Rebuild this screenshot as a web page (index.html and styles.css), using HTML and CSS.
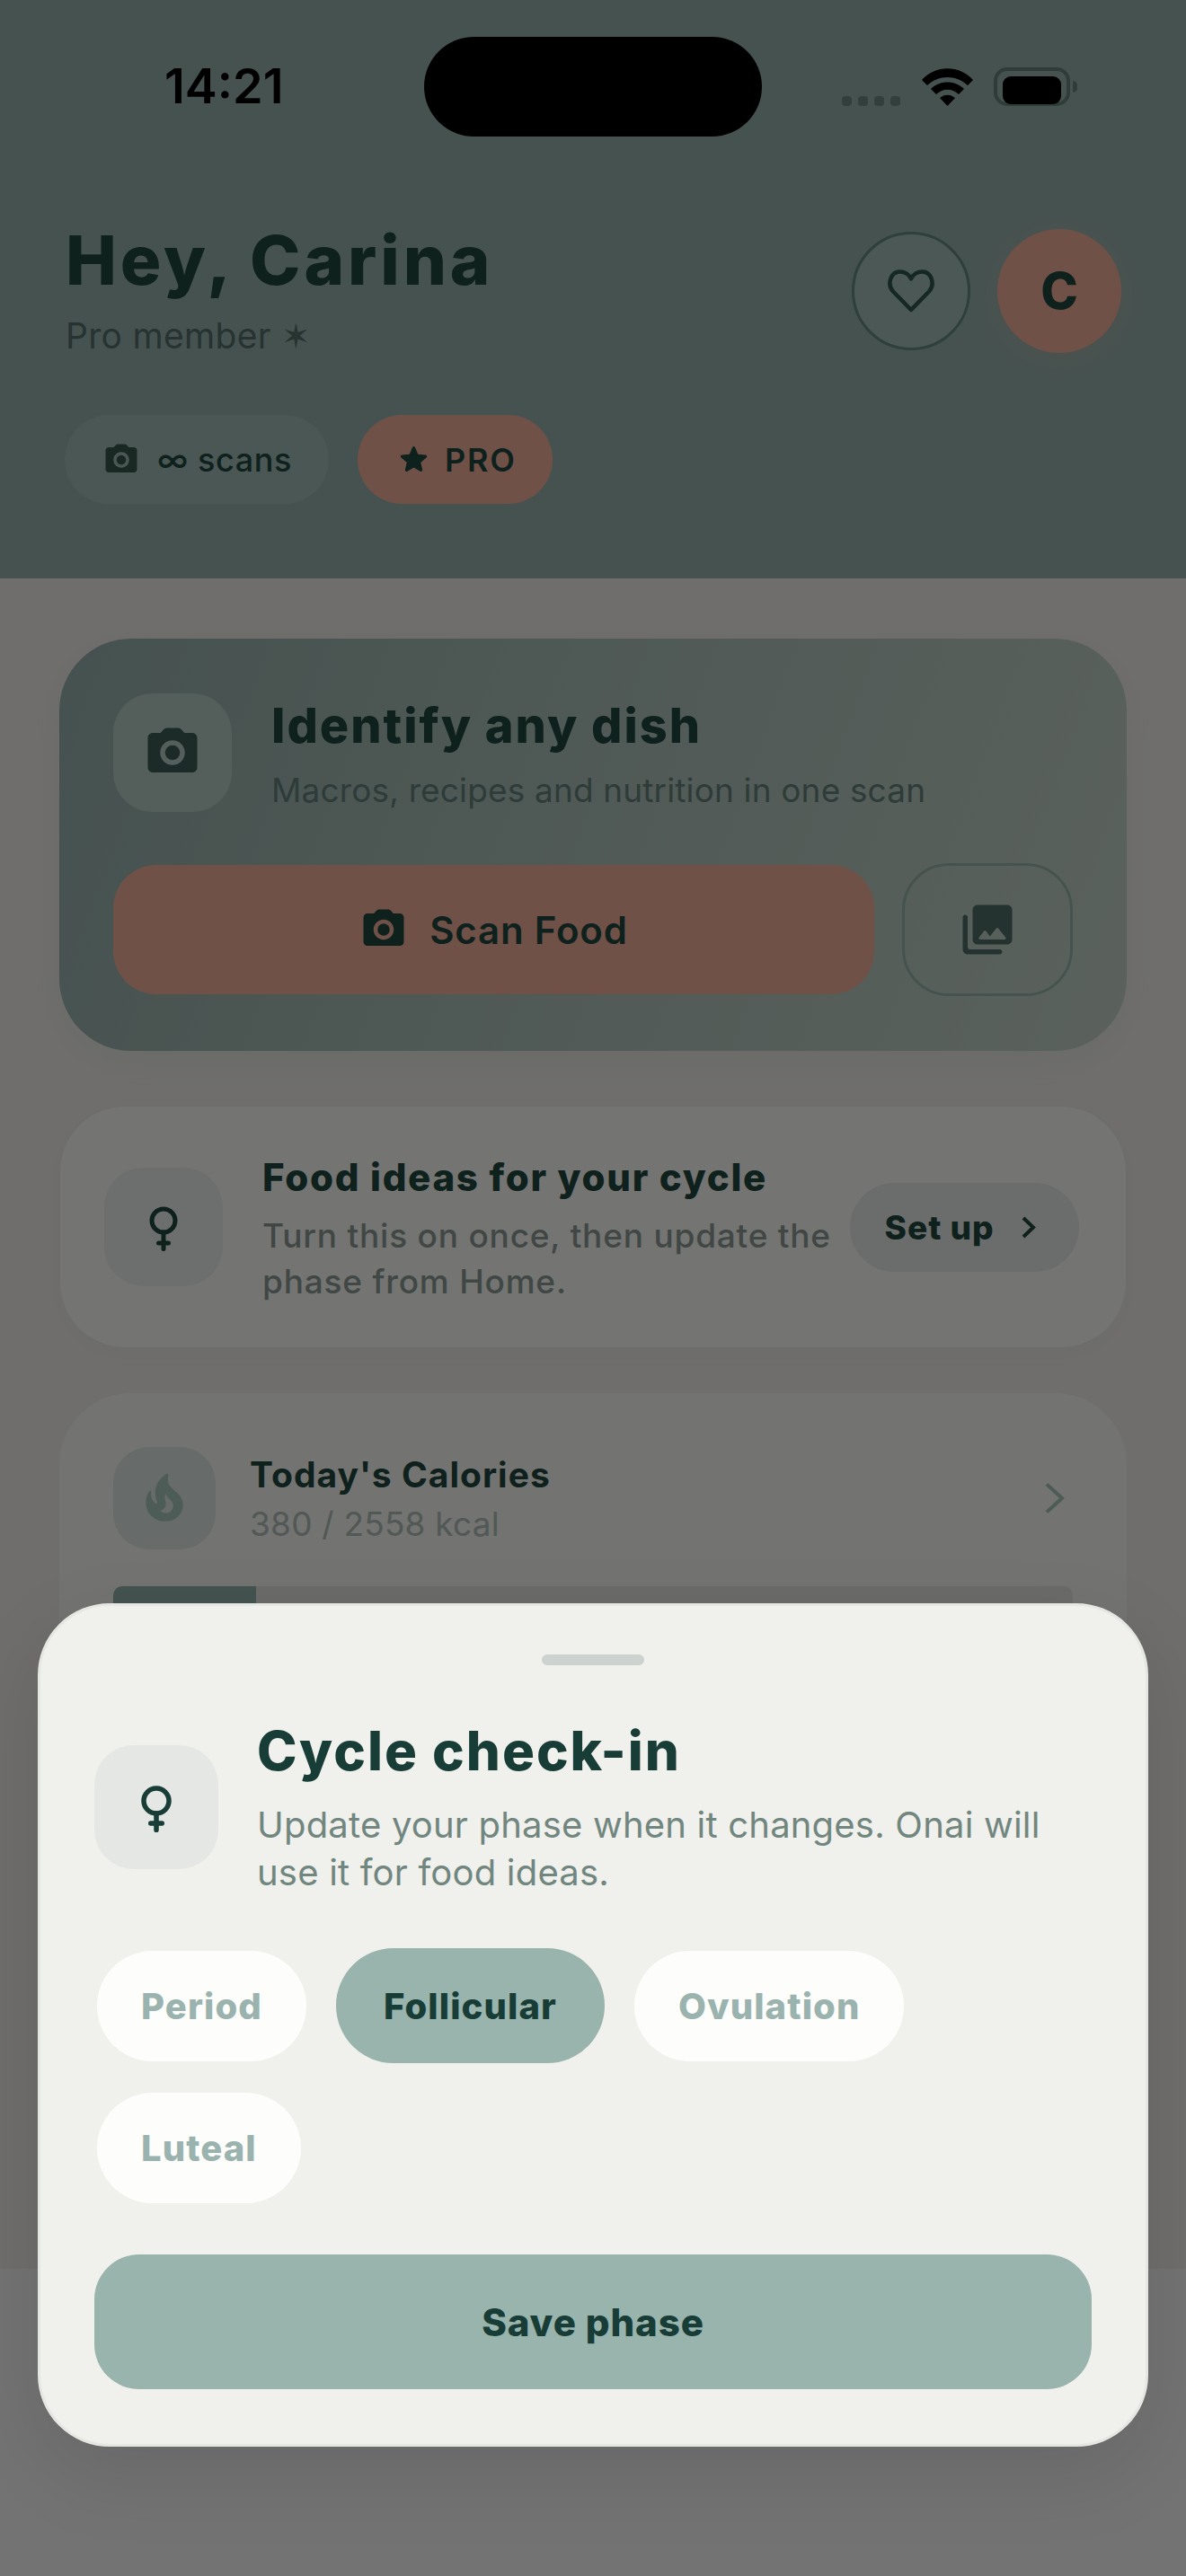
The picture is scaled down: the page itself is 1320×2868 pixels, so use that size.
FILE: index.html
```html
<!DOCTYPE html>
<html lang="en">
<head>
    <meta charset="UTF-8">
    <meta name="viewport" content="width=device-width, initial-scale=1.0">
    <title>Cycle check-in</title>
    <link rel="stylesheet" href="styles.css">
</head>
<body>
    <div class="screen">
        <header class="hero">
            <div class="status">
                <span class="time">14:21</span>
                <span class="island"></span>
                <div class="status-icons">
                    <div class="signal"><i></i><i></i><i></i><i></i></div>
                    <svg class="wifi" viewBox="0 0 57 42">
                        <path d="M0 13C15-4 42-4 57 13l-6 6C38 7 19 7 6 19z"/>
                        <path d="M10 23c10-10 27-10 37 0l-6 6c-8-7-17-7-25 0z"/>
                        <path d="M20 33c5-4.500 12-4.500 17 0l-8.500 9z"/>
                    </svg>
                    <div class="battery"><span class="battery-fill"></span></div>
                    <span class="battery-nub"></span>
                </div>
            </div>

            <div class="hero-row">
                <div>
                    <h1 class="greeting">Hey, Carina</h1>
                    <p class="member">Pro member ✶</p>
                </div>
                <div class="hero-actions">
                    <button class="heart-btn">
                        <svg class="heart" viewBox="0 0 56 51">
                            <path d="M28 47 8 26.500C1 19 5 4.500 15.500 4.500 21 4.500 26 7.500 28 12.500 30 7.500 35 4.500 40.500 4.500 51 4.500 55 19 48 26.500z"/>
                        </svg>
                    </button>
                    <div class="avatar">C</div>
                </div>
            </div>

            <div class="pills">
                <div class="pill pill-scans">
                    <svg class="pill-icon" viewBox="0 0 24 24"><path d="M20 4h-3.170l-1.240-1.350c-.37-.41-.91-.65-1.470-.65H9.880c-.56 0-1.100.24-1.480.65L7.170 4H4c-1.100 0-2 .9-2 2v12c0 1.100.9 2 2 2h16c1.100 0 2-.9 2-2V6c0-1.100-.9-2-2-2zm-8 13c-2.760 0-5-2.240-5-5s2.240-5 5-5 5 2.240 5 5-2.240 5-5 5z"/><circle cx="12" cy="12" r="3"/></svg>
                    <span>∞ scans</span>
                </div>
                <div class="pill pill-pro">
                    <svg class="star" viewBox="0 0 24 24"><path d="M12 17.270l4.150 2.510c.76.46 1.690-.22 1.490-1.080l-1.100-4.720 3.670-3.180c.67-.58.31-1.680-.57-1.750l-4.830-.41-1.890-4.460c-.34-.81-1.500-.81-1.840 0L9.190 8.630l-4.830.41c-.88.07-1.240 1.170-.57 1.750l3.670 3.180-1.100 4.720c-.2.86.73 1.540 1.490 1.080l4.150-2.500z"/></svg>
                    <span>PRO</span>
                </div>
            </div>
        </header>

        <main class="content">
            <section class="scan-card">
                <div class="scan-top">
                    <div class="icon-box scan-icon">
                        <svg class="camera" viewBox="0 0 24 24"><path d="M20 4h-3.170l-1.240-1.350c-.37-.41-.91-.65-1.470-.65H9.880c-.56 0-1.100.24-1.480.65L7.170 4H4c-1.100 0-2 .9-2 2v12c0 1.100.9 2 2 2h16c1.100 0 2-.9 2-2V6c0-1.100-.9-2-2-2zm-8 13c-2.760 0-5-2.240-5-5s2.240-5 5-5 5 2.240 5 5-2.240 5-5 5z"/><circle cx="12" cy="12" r="3"/></svg>
                    </div>
                    <div>
                        <h2 class="scan-title">Identify any dish</h2>
                        <p class="scan-sub">Macros, recipes and nutrition in one scan</p>
                    </div>
                </div>
                <div class="scan-actions">
                    <button class="scan-btn">
                        <svg class="scan-btn-icon" viewBox="0 0 24 24"><path d="M20 4h-3.170l-1.240-1.350c-.37-.41-.91-.65-1.470-.65H9.880c-.56 0-1.100.24-1.480.65L7.170 4H4c-1.100 0-2 .9-2 2v12c0 1.100.9 2 2 2h16c1.100 0 2-.9 2-2V6c0-1.100-.9-2-2-2zm-8 13c-2.760 0-5-2.240-5-5s2.240-5 5-5 5 2.240 5 5-2.240 5-5 5z"/><circle cx="12" cy="12" r="3"/></svg>
                        Scan Food
                    </button>
                    <button class="gallery-btn">
                        <svg class="gallery" viewBox="0 0 24 24"><path d="M22 16V4c0-1.100-.9-2-2-2H8c-1.100 0-2 .9-2 2v12c0 1.100.9 2 2 2h12c1.100 0 2-.9 2-2zm-10.600-3.470 1.630 2.180 2.580-3.220c.2-.25.58-.25.78 0l2.960 3.700c.26.33.03.81-.39.81H9c-.41 0-.65-.47-.4-.8l2-2.670c.2-.26.6-.26.8 0zM2 7v13c0 1.100.9 2 2 2h13c.55 0 1-.45 1-1s-.45-1-1-1H5c-.55 0-1-.45-1-1V7c0-.55-.45-1-1-1s-1 .45-1 1z"/></svg>
                    </button>
                </div>
            </section>

            <section class="cycle-card">
                <div class="icon-box cycle-icon">
                    <svg class="venus" viewBox="0 0 40 50"><circle cx="20" cy="16" r="13"/><path d="M20 29v18.500M14.500 41h11"/></svg>
                </div>
                <div class="cycle-text">
                    <h3 class="cycle-title">Food ideas for your cycle</h3>
                    <p class="cycle-sub">Turn this on once, then update the phase from Home.</p>
                </div>
                <button class="setup-btn">
                    Set up
                    <svg class="setup-chevron" viewBox="0 0 18 27"><path d="M3 3l11 10.500L3 24"/></svg>
                </button>
            </section>

            <section class="calories-card">
                <div class="calories-row">
                    <div class="icon-box calories-icon">
                        <svg class="flame" viewBox="0 0 24 24"><path d="M19.480 12.350c-1.570-4.080-7.160-4.300-5.810-10.230.1-.44-.37-.78-.75-.55C9.290 3.710 6.680 8 8.870 13.620c.18.46-.36.89-.75.59-1.810-1.370-2-3.340-1.840-4.750.06-.52-.62-.77-.91-.34C4.690 10.160 4 11.840 4 14.370c.38 5.600 5.110 7.320 6.810 7.540 2.430.31 5.060-.14 6.950-1.870 2.080-1.930 2.840-5.010 1.720-7.690zm-9.280 5.030c1.440-.35 2.180-1.390 2.380-2.310.33-1.430-.96-2.830-.09-5.090.33 1.870 3.270 3.040 3.270 5.080.08 2.530-2.660 4.700-5.560 2.320z"/></svg>
                    </div>
                    <div class="calories-text">
                        <h3 class="calories-title">Today's Calories</h3>
                        <p class="calories-sub">380 / 2558 kcal</p>
                    </div>
                    <svg class="calories-chevron" viewBox="0 0 24 36"><path d="M3 2.500 20 18 3 33.500"/></svg>
                </div>
                <div class="track"><div class="track-fill" style="width: 14.9%"></div></div>
            </section>
        </main>

        <div class="tabbar"></div>
    </div>

    <div class="scrim"></div>

    <section class="sheet">
        <div class="handle"></div>
        <div class="sheet-head">
            <div class="sheet-icon">
                <svg class="sheet-venus" viewBox="0 0 40 52"><circle cx="20" cy="17" r="14"/><path d="M20 31v18.500M13.750 42h12.500"/></svg>
            </div>
            <div>
                <h2 class="sheet-title">Cycle check-in</h2>
                <p class="sheet-sub">Update your phase when it changes. Onai will use it for food ideas.</p>
            </div>
        </div>
        <div class="chips">
            <button class="chip">Period</button>
            <button class="chip chip-active">Follicular</button>
            <button class="chip">Ovulation</button>
            <button class="chip">Luteal</button>
        </div>
        <button class="save-btn">Save phase</button>
    </section>
</body>
</html>
```

FILE: styles.css
```css
* {
    box-sizing: border-box;
}
body {
    margin: 0;
    width: 1320px;
    height: 2868px;
    overflow: hidden;
    position: relative;
    font-family: Inter, "Liberation Sans", sans-serif;
    color: #1e423a;
}
h1, h2, h3, p {
    margin: 0;
}
button {
    font-family: inherit;
    color: inherit;
    border: none;
    padding: 0;
}
svg {
    display: block;
    fill: currentColor;
}
.screen {
    height: 2868px;
    display: flex;
    flex-direction: column;
}

/* top green area */
.hero {
    height: 644px;
    padding: 41px 72px 0 73px;
    background: #8da5a1;
}
.status {
    display: grid;
    grid-template-columns: 1fr 376px 1fr;
    height: 111px;
    margin: 0 -72px 0 -73px;
    padding: 0 72px;
}
.time {
    font-size: 54px;
    font-weight: 600;
    line-height: 66px;
    padding: 22px 0 0 111px;
    color: #000;
}
.island {
    background: #000;
    border-radius: 56px;
}
.status-icons {
    display: flex;
    align-items: flex-end;
    padding: 34px 0 34px 89px;
}
.signal {
    display: flex;
    gap: 7px;
    margin-right: 24px;
}
.signal i {
    width: 11px;
    height: 11px;
    border-radius: 4px;
    background: #647e78;
}
.wifi {
    width: 57px;
    height: 42px;
    color: #000;
    margin-right: 23px;
}
.battery {
    width: 85px;
    height: 43px;
    padding: 7px;
    border: 4px solid #5e7872;
    border-radius: 15px;
}
.battery-fill {
    display: block;
    height: 31px;
    margin: -1px;
    background: #000;
    border-radius: 9px;
}
.battery-nub {
    width: 5px;
    height: 13px;
    margin: 0 0 15px 3px;
    background: #5e7872;
    border-radius: 0 6px 6px 0;
}

.hero-row {
    display: flex;
    justify-content: space-between;
    align-items: center;
    margin-top: 92px;
}
.greeting {
    font-size: 76px;
    font-weight: 800;
    line-height: 90px;
    letter-spacing: 3.900px;
}
.member {
    font-size: 39px;
    line-height: 50px;
    margin-top: 15px;
    color: #4c6660;
    letter-spacing: 0.3px;
}
.hero-actions {
    display: flex;
    align-items: center;
    gap: 30px;
    margin-top: 4px;
}
.heart-btn {
    width: 132px;
    height: 132px;
    border-radius: 50%;
    border: 3px solid #5e7e76;
    background: #98b0ac;
    display: flex;
    align-items: center;
    justify-content: center;
}
.heart {
    width: 56px;
    height: 51px;
    fill: none;
    stroke: #2a5048;
    stroke-width: 4.500;
    stroke-linejoin: round;
}
.avatar {
    width: 138px;
    height: 138px;
    border-radius: 50%;
    background: #dea290;
    font-size: 56px;
    font-weight: 800;
    display: flex;
    align-items: center;
    justify-content: center;
    box-shadow: 0 6px 36px rgba(222, 162, 144, 0.16);
}
.pills {
    display: flex;
    gap: 32px;
    margin: 63px 0 0 -1px;
}
.pill {
    height: 99px;
    border-radius: 50px;
    display: flex;
    align-items: center;
    font-size: 36px;
    font-weight: 500;
}
.pill-scans {
    width: 294px;
    padding-left: 42px;
    gap: 19px;
    background: #94aea8;
    letter-spacing: 0.6px;
}
.pill-icon {
    width: 42px;
    height: 42px;
    color: #345048;
}
.pill-pro {
    width: 217px;
    padding-left: 42px;
    gap: 14px;
    background: #dea290;
    font-weight: 600;
    letter-spacing: 1.800px;
}
.star {
    width: 41px;
    height: 41px;
}

/* page below the hero */
.content {
    flex: 1;
    padding: 67px 66px 0;
    background: #dfddd9;
    overflow: hidden;
}
.icon-box {
    flex-shrink: 0;
    display: flex;
    align-items: center;
    justify-content: center;
}
.scan-card {
    height: 459px;
    padding: 61px 60px 0;
    border-radius: 80px;
    background: linear-gradient(110deg, #8ca4a0, #b6c4ba);
    box-shadow: 0 12px 36px rgba(140, 164, 160, 0.12);
}
.scan-top {
    display: flex;
    align-items: center;
    gap: 44px;
}
.scan-icon {
    width: 132px;
    height: 132px;
    border-radius: 44px;
    background: #a8beb8;
}
.camera {
    width: 66px;
    height: 66px;
    color: #385450;
}
.scan-title {
    font-size: 54px;
    font-weight: 800;
    line-height: 64px;
    margin-top: 4px;
    letter-spacing: 2px;
}
.scan-sub {
    font-size: 37px;
    line-height: 48px;
    margin-top: 16px;
    color: #5c7872;
    letter-spacing: 0.15px;
}
.scan-actions {
    display: flex;
    align-items: center;
    gap: 31px;
    margin-top: 57px;
}
.scan-btn {
    flex: 1;
    height: 144px;
    border-radius: 48px;
    background: #dea290;
    display: flex;
    align-items: center;
    justify-content: center;
    gap: 24px;
    font-size: 42px;
    font-weight: 600;
    letter-spacing: 0.8px;
}
.scan-btn-icon {
    width: 54px;
    height: 54px;
}
.gallery-btn {
    width: 190px;
    height: 148px;
    border-radius: 52px;
    border: 3px solid #8aa69e;
    background: transparent;
    display: flex;
    align-items: center;
    justify-content: center;
}
.gallery {
    width: 66px;
    height: 66px;
    color: #486660;
}

.cycle-card {
    height: 268px;
    margin: 62px 1px 0;
    padding: 0 52px 0 49px;
    display: flex;
    align-items: center;
    gap: 44px;
    border-radius: 72px;
    background: #e8e8e4;
    box-shadow: 0 6px 24px rgba(30, 66, 58, 0.03);
}
.cycle-icon {
    width: 132px;
    height: 132px;
    padding-top: 4px;
    border-radius: 44px;
    background: #dadfdc;
}
.venus {
    width: 40px;
    height: 50px;
    fill: none;
    stroke: currentColor;
    stroke-width: 5;
    stroke-linecap: round;
}
.cycle-text {
    flex: 1;
    min-width: 0;
    padding-top: 4px;
}
.cycle-title {
    font-size: 42px;
    font-weight: 800;
    line-height: 52px;
    letter-spacing: 1.700px;
}
.cycle-sub {
    font-size: 37px;
    font-weight: 500;
    line-height: 51px;
    margin-top: 13px;
    color: #808e8a;
    letter-spacing: 0.8px;
}
.setup-btn {
    flex-shrink: 0;
    width: 255px;
    height: 99px;
    margin-left: -44px;
    padding-right: 8px;
    border-radius: 50px;
    background: #d6dbd8;
    display: flex;
    align-items: center;
    justify-content: center;
    gap: 30px;
    font-size: 37px;
    font-weight: 800;
    letter-spacing: 1px;
}
.setup-chevron {
    width: 18px;
    height: 27px;
    fill: none;
    stroke: currentColor;
    stroke-width: 4;
}

.calories-card {
    height: 700px;
    margin-top: 51px;
    padding: 60px 60px 0;
    border-radius: 80px;
    background: #e6e6e2;
}
.calories-row {
    display: flex;
    align-items: center;
    gap: 38px;
}
.calories-icon {
    width: 114px;
    height: 114px;
    border-radius: 40px;
    background: #ced6d2;
}
.flame {
    width: 62px;
    height: 62px;
    color: #9cb8b0;
}
.calories-text {
    flex: 1;
    padding-top: 1px;
}
.calories-title {
    font-size: 39px;
    font-weight: 700;
    line-height: 48px;
    letter-spacing: 1px;
}
.calories-sub {
    font-size: 37px;
    line-height: 46px;
    margin-top: 8px;
    color: #a2b0ac;
    letter-spacing: 0.2px;
}
.calories-chevron {
    width: 24px;
    height: 36px;
    margin-right: 8px;
    fill: none;
    stroke: #9cb8b0;
    stroke-width: 4;
}
.track {
    height: 60px;
    margin-top: 41px;
    border-radius: 10px;
    background: #d6d6d2;
    overflow: hidden;
}
.track-fill {
    height: 100%;
    background: #8aa6a0;
}
.tabbar {
    height: 342px;
    background: #e6e6e6;
}

/* modal on top */
.scrim {
    position: absolute;
    inset: 0;
    background: rgba(0, 0, 0, 0.5);
}
.sheet {
    position: absolute;
    left: 42px;
    top: 1785px;
    width: 1236px;
    height: 939px;
    padding: 54px 60px 0;
    background: #f0f0ec;
    border: 3px solid #e5e7e3;
    border-radius: 80px;
    box-shadow: 0 30px 90px rgba(0, 0, 0, 0.1);
}
.handle {
    width: 114px;
    height: 12px;
    margin: 0 auto;
    border-radius: 6px;
    background: #ccd2cd;
}
.sheet-head {
    display: flex;
    align-items: center;
    gap: 43px;
    margin-top: 59px;
}
.sheet-icon {
    flex-shrink: 0;
    width: 138px;
    height: 138px;
    padding-top: 4px;
    border-radius: 44px;
    background: #e4e7e3;
    display: flex;
    align-items: center;
    justify-content: center;
}
.sheet-venus {
    width: 40px;
    height: 52px;
    fill: none;
    stroke: #183c36;
    stroke-width: 5.500;
    stroke-linecap: round;
}
.sheet-title {
    font-size: 60px;
    font-weight: 800;
    line-height: 72px;
    color: #183c36;
    letter-spacing: 2px;
}
.sheet-sub {
    font-size: 40px;
    line-height: 53px;
    margin-top: 20px;
    color: #71867f;
    letter-spacing: 0.2px;
}
.chips {
    display: flex;
    flex-wrap: wrap;
    align-items: center;
    gap: 33px;
    margin-top: 58px;
    padding-left: 3px;
}
.chip {
    height: 123px;
    padding: 0 49px;
    border-radius: 62px;
    background: #fdfdfb;
    color: #9ab3ae;
    font-size: 40px;
    font-weight: 800;
    letter-spacing: 1.100px;
}
.chip-active {
    height: 128px;
    padding: 0 53px;
    border-radius: 64px;
    background: #99b3ad;
    color: #183c36;
}
.save-btn {
    display: block;
    width: 100%;
    height: 150px;
    margin-top: 57px;
    border-radius: 50px;
    background: #99b3ad;
    color: #183c36;
    font-size: 42px;
    font-weight: 800;
    letter-spacing: 0.9px;
}
```
